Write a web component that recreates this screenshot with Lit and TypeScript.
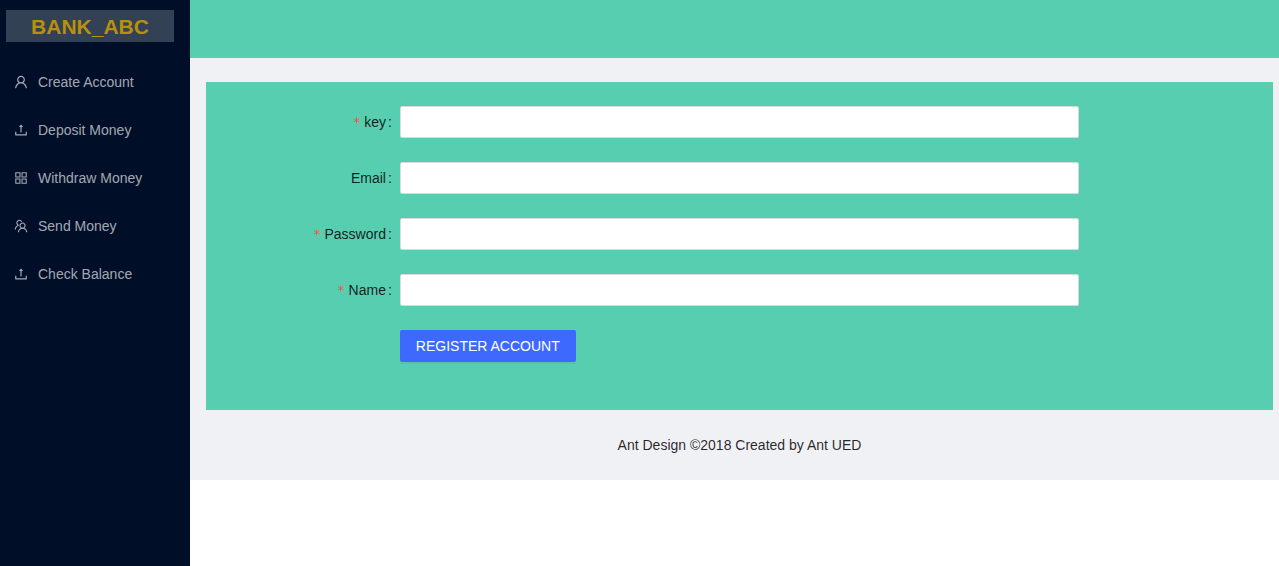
import { LitElement, html, css } from "lit";
import { customElement, property } from "lit/decorators.js";

const ICONS: Record<string, string> = {
  user: "M858.5 763.6a374 374 0 00-80.6-119.5 375.63 375.63 0 00-119.5-80.6c-.4-.2-.8-.3-1.2-.5C719.5 518 760 444.7 760 362c0-137-111-248-248-248S264 225 264 362c0 82.7 40.5 156 102.8 201.1-.4.2-.8.3-1.2.5-44.8 18.9-85 46-119.5 80.6a375.63 375.63 0 00-80.6 119.5A371.7 371.7 0 00136 901.8a8 8 0 008 8.2h60c4.4 0 7.9-3.5 8-7.8 2-77.2 33-149.5 87.8-204.3 56.7-56.7 132-87.9 212.2-87.9s155.5 31.2 212.2 87.9C779 752.7 810 825 812 902.2c.1 4.4 3.6 7.8 8 7.8h60a8 8 0 008-8.2c-1-47.8-10.9-94.3-29.5-138.2zM512 534c-45.9 0-89.1-17.9-121.6-50.4S340 407.9 340 362c0-45.9 17.9-89.1 50.4-121.6S466.1 190 512 190s89.1 17.9 121.6 50.4S684 316.1 684 362c0 45.9-17.9 89.1-50.4 121.6S557.9 534 512 534z",
  upload: "M400 317.7h73.9V656c0 4.4 3.6 8 8 8h60c4.4 0 8-3.6 8-8V317.7H624c6.7 0 10.4-7.7 6.3-12.9L518.3 163a8 8 0 00-12.6 0l-112 141.7c-4.1 5.3-.4 13 6.3 13zM878 626h-60c-4.4 0-8 3.6-8 8v154H214V634c0-4.4-3.6-8-8-8h-60c-4.4 0-8 3.6-8 8v198c0 17.7 14.3 32 32 32h684c17.7 0 32-14.3 32-32V634c0-4.4-3.6-8-8-8z",
  appstore: "M464 144H160c-8.8 0-16 7.2-16 16v304c0 8.8 7.2 16 16 16h304c8.8 0 16-7.2 16-16V160c0-8.8-7.2-16-16-16zm-52 268H212V212h200v200zm452-268H560c-8.8 0-16 7.2-16 16v304c0 8.8 7.2 16 16 16h304c8.8 0 16-7.2 16-16V160c0-8.8-7.2-16-16-16zm-52 268H612V212h200v200zM464 544H160c-8.8 0-16 7.2-16 16v304c0 8.8 7.2 16 16 16h304c8.8 0 16-7.2 16-16V560c0-8.8-7.2-16-16-16zm-52 268H212V612h200v200zm452-268H560c-8.8 0-16 7.2-16 16v304c0 8.8 7.2 16 16 16h304c8.8 0 16-7.2 16-16V560c0-8.8-7.2-16-16-16zm-52 268H612V612h200v200z",
  team: "M824.2 699.9a301.55 301.55 0 00-86.4-60.4C783.1 602.8 812 546.8 812 484c0-110.8-92.4-201.7-203.2-200-109.1 1.7-197 90.6-197 200 0 62.8 29 118.8 74.2 155.5a300.95 300.95 0 00-86.4 60.4C345 754.6 314 826.8 312 903.8a8 8 0 008 8.2h56c4.3 0 7.9-3.4 8-7.7 1.9-58 25.4-112.3 66.7-153.5A226.62 226.62 0 01612 684c60.9 0 118.2 23.7 161.3 66.8C814.6 792 838 846.3 840 904.3c.1 4.3 3.7 7.7 8 7.7h56a8 8 0 008-8.2c-2-77-33-149.2-87.8-203.9zM612 612c-34.2 0-66.4-13.3-90.5-37.5a126.86 126.86 0 01-37.5-91.8c.3-32.8 13.4-64.5 36.3-88 24-24.6 56.1-38.3 90.4-38.7 33.9-.3 66.8 12.9 91 36.6 24.8 24.3 38.4 56.8 38.4 91.4 0 34.2-13.3 66.3-37.5 90.5A127.3 127.3 0 01612 612zM361.5 510.4c-.9-8.7-1.4-17.5-1.4-26.4 0-15.9 1.5-31.4 4.3-46.5.7-3.6-1.2-7.3-4.5-8.8-13.6-6.1-26.1-14.5-36.9-25.1a127.54 127.54 0 01-38.7-95.4c.9-32.1 13.8-62.6 36.3-85.6 24.7-25.3 57.9-39.1 93.2-38.7 31.9.3 62.7 12.6 86 34.4 7.9 7.4 14.7 15.6 20.4 24.4 2 3.1 5.9 4.4 9.3 3.2 17.6-6.1 36.2-10.4 55.3-12.4 5.6-.6 8.8-6.6 6.3-11.6-32.5-64.3-98.9-108.7-175.7-109.9-110.9-1.7-203.3 89.2-203.3 199.9 0 62.8 28.9 118.8 74.2 155.5-31.8 14.7-61.1 35-86.5 60.4-54.8 54.7-85.8 126.9-87.8 204a8 8 0 008 8.2h56.1c4.3 0 7.9-3.4 8-7.7 1.9-58 25.4-112.3 66.7-153.5 29.4-29.4 65.4-49.8 104.7-59.7 3.9-1 6.5-4.7 6-8.7z",
};

const MENU = [
  { icon: "user", label: "Create Account" },
  { icon: "upload", label: "Deposit Money" },
  { icon: "appstore", label: "Withdraw Money" },
  { icon: "team", label: "Send Money" },
  { icon: "upload", label: "Check Balance" },
];

const FIELDS = [
  { label: "key", required: true, type: "text" },
  { label: "Email", required: false, type: "text" },
  { label: "Password", required: true, type: "password" },
  { label: "Name", required: true, type: "text" },
];

@customElement("menu-icon")
export class MenuIcon extends LitElement {
  static styles = css`
    :host { display: block; flex: none; width: 14px; height: 14px; }
    .glyph { display: block; width: 14px; height: 14px; fill: currentColor; }
  `;

  @property() name = "";

  render() {
    return html`<svg class="glyph" viewBox="64 64 896 896" aria-hidden="true"><path d=${ICONS[this.name] ?? ""}></path></svg>`;
  }
}

@customElement("app-root")
export class AppRoot extends LitElement {
  static styles = css`
    :host {
      display: flex;
      min-height: 100vh;
      background: #fff;
      color: rgba(0, 0, 0, 0.85);
      font: 14px/22px "Liberation Sans", Arial, sans-serif;
    }
    * { box-sizing: border-box; }
    .sider { flex: none; width: 190px; background: #000e28; }
    .logo {
      height: 32px;
      margin: 10px 16px 16px 6px;
      background: #334155;
      color: #b8900b;
      font-size: 21px;
      font-weight: 700;
      line-height: 33px;
      text-align: center;
    }
    .menu { list-style: none; margin: 0; padding: 4px 0 0; }
    .item {
      display: flex;
      align-items: center;
      gap: 10px;
      height: 40px;
      margin-bottom: 8px;
      padding-left: 14px;
      color: rgba(255, 255, 255, 0.65);
    }
    .page { flex: 1; align-self: flex-start; background: #f0f1f5; }
    .header { height: 58px; background: #58ceb1; }
    .content { margin: 24px 6px 0 16px; padding: 24px; background: #58ceb1; }
    .row { display: flex; height: 32px; margin-bottom: 24px; }
    .label {
      flex: none;
      display: flex;
      align-items: center;
      justify-content: flex-end;
      width: 16.6667%;
      white-space: nowrap;
    }
    .mark { margin-right: 4px; color: #ff4d4f; font-family: "DejaVu Sans", sans-serif; line-height: 14px; }
    .colon { margin: 0 8px 0 2px; }
    .control { flex: none; width: 66.6667%; }
    .input {
      display: block;
      width: 100%;
      height: 32px;
      padding: 4px 11px;
      border: 1px solid #d9d9d9;
      border-radius: 2px;
      background: #fff;
      font: inherit;
      outline: none;
    }
    .submit {
      display: block;
      height: 32px;
      padding: 0 16px;
      border: 0;
      border-radius: 2px;
      background: #3d69ff;
      color: #fff;
      font: inherit;
      box-shadow: 0 2px 0 rgba(0, 0, 0, 0.045);
    }
    .footer { padding: 24px 0 24px 10px; text-align: center; }
  `;

  render() {
    return html`
      <aside class="sider">
        <div class="logo">BANK_ABC</div>
        <ul class="menu">
          ${MENU.map((m) => html`<li class="item"><menu-icon name=${m.icon}></menu-icon><span>${m.label}</span></li>`)}
        </ul>
      </aside>
      <section class="page">
        <header class="header"></header>
        <main class="content">
          ${FIELDS.map(
            (f) => html`<div class="row">
              <label class="label">${f.required ? html`<span class="mark">*</span>` : ""}<span>${f.label}</span><span class="colon">:</span></label>
              <div class="control"><input class="input" type=${f.type} aria-label=${f.label} /></div>
            </div>`
          )}
          <div class="row">
            <div class="label"></div>
            <div class="control"><button class="submit">REGISTER ACCOUNT</button></div>
          </div>
        </main>
        <footer class="footer">Ant Design ©2018 Created by Ant UED</footer>
      </section>
    `;
  }
}
